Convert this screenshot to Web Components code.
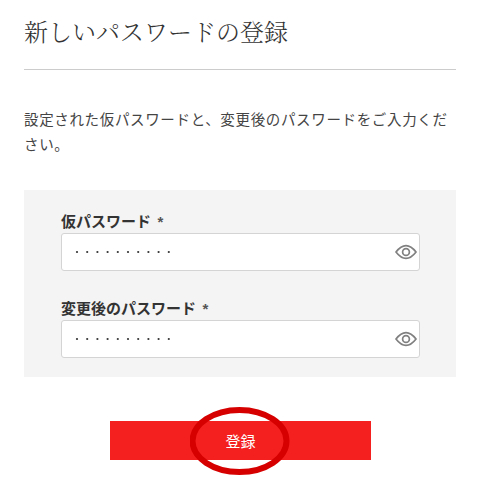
<!DOCTYPE html>
<html lang="ja">
<head>
<meta charset="utf-8">
<title>新しいパスワードの登録</title>
<style>
html, body { margin: 0; background: #fff; }
body { font-family: "Noto Sans CJK JP", sans-serif; color: #333; }
</style>
</head>
<body>
<password-page>
  <span slot="title">新しいパスワードの登録</span>
  <span slot="lead">設定された仮パスワードと、変更後のパスワードをご入力ください。</span>
  <password-field label="仮パスワード"></password-field>
  <password-field label="変更後のパスワード"></password-field>
  <submit-button slot="action">登録</submit-button>
</password-page>

<script>
const pageTemplate = document.createElement('template');
pageTemplate.innerHTML = `
<style>
:host {
  display: block;
  width: 482px;
  height: 494px;
  overflow: hidden;
  padding: 0 26px 0 24px;
  box-sizing: border-box;
}
h1 {
  margin: 0;
  padding: 16px 0 23px;
  height: 70px;
  box-sizing: border-box;
  border-bottom: 1px solid #ccc;
  font-family: "Noto Serif CJK JP", "Liberation Serif", "Noto Sans CJK JP", serif;
  font-weight: 300;
  font-size: 24px;
  line-height: 30px;
  color: #333;
}
p {
  margin: 0;
  padding: 36px 0 34px;
  font-size: 14.5px;
  line-height: 25px;
  letter-spacing: 0.65px;
  color: #444;
}
.panel {
  display: flex;
  flex-direction: column;
  gap: 27px;
  padding: 21px 36px 19px 37px;
  background: #f4f4f4;
}
.action {
  display: flex;
  justify-content: center;
  padding: 44px 0 0 1px;
}
</style>
<h1><slot name="title"></slot></h1>
<p><slot name="lead"></slot></p>
<div class="panel"><slot></slot></div>
<div class="action"><slot name="action"></slot></div>
`;

class PasswordPage extends HTMLElement {
  constructor() {
    super();
    this.attachShadow({mode: 'open'});
    this.shadowRoot.append(pageTemplate.content.cloneNode(true));
  }
}

const fieldTemplate = document.createElement('template');
fieldTemplate.innerHTML = `
<style>
:host {
  display: block;
}
label {
  display: block;
  height: 22px;
  font-size: 15px;
  line-height: 20px;
  font-weight: 700;
  color: #333;
}
.req {
  margin-left: 3px;
  font-family: "Liberation Sans", sans-serif;
  font-size: 15px;
  color: #555;
}
.box {
  display: flex;
  align-items: center;
  justify-content: space-between;
  height: 38px;
  box-sizing: border-box;
  padding: 0 2px 0 13px;
  background: #fff;
  border: 1px solid #d4d4d4;
  border-radius: 3px;
}
svg {
  display: block;
}
</style>
<label><span class="text"></span> <span class="req">*</span></label>
<div class="box">
  <svg width="98" height="4" viewBox="0 0 98 4" fill="#333">
    <circle cx="2" cy="2" r="1.1"/><circle cx="12.2" cy="2" r="1.1"/><circle cx="22.4" cy="2" r="1.1"/>
    <circle cx="32.6" cy="2" r="1.1"/><circle cx="42.8" cy="2" r="1.1"/><circle cx="53" cy="2" r="1.1"/>
    <circle cx="63.2" cy="2" r="1.1"/><circle cx="73.4" cy="2" r="1.1"/><circle cx="83.6" cy="2" r="1.1"/>
    <circle cx="93.8" cy="2" r="1.1"/>
  </svg>
  <svg width="22" height="16" viewBox="0 0 22 16" fill="none" stroke="#808080">
    <path d="M1 8 C4.5 3.4 7.5 1.6 11 1.6 C14.5 1.6 17.5 3.4 21 8 C17.5 12.6 14.5 14.4 11 14.4 C7.5 14.4 4.5 12.6 1 8 Z" stroke-width="1.7"/>
    <circle cx="11" cy="8" r="3.4" stroke-width="1.7"/>
  </svg>
</div>
`;

class PasswordField extends HTMLElement {
  constructor() {
    super();
    this.attachShadow({mode: 'open'});
    this.shadowRoot.append(fieldTemplate.content.cloneNode(true));
  }

  connectedCallback() {
    this.shadowRoot.querySelector('.text').textContent = this.getAttribute('label');
  }
}

const buttonTemplate = document.createElement('template');
buttonTemplate.innerHTML = `
<style>
:host {
  display: block;
  position: relative;
}
button {
  display: block;
  width: 261px;
  height: 39px;
  padding: 0;
  border: 0;
  border-radius: 0;
  background: #f41f1f;
  color: #fff;
  font-family: inherit;
  font-size: 15px;
}
svg {
  position: absolute;
  left: 80px;
  top: -15px;
}
</style>
<button type="button"><slot></slot></button>
<svg width="100" height="69" viewBox="0 0 100 69" fill="none">
  <ellipse cx="49.5" cy="35" rx="47" ry="31" stroke="#d60000" stroke-width="6"/>
</svg>
`;

class SubmitButton extends HTMLElement {
  constructor() {
    super();
    this.attachShadow({mode: 'open'});
    this.shadowRoot.append(buttonTemplate.content.cloneNode(true));
  }
}

window.customElements.define('password-page', PasswordPage);
window.customElements.define('password-field', PasswordField);
window.customElements.define('submit-button', SubmitButton);
</script>
</body>
</html>
